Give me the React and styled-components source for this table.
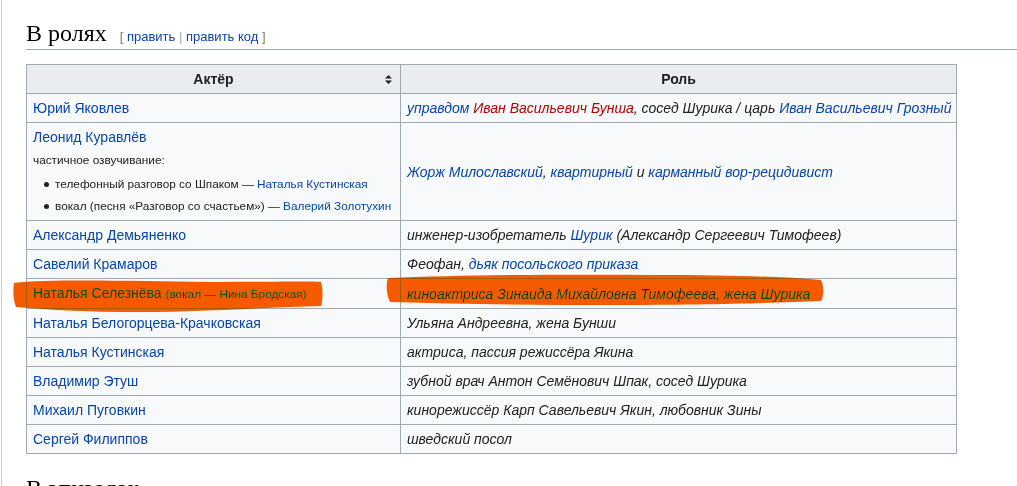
import React from 'react';
import styled, { createGlobalStyle } from 'styled-components';

const GlobalStyle = createGlobalStyle`
  html, body {
    margin: 0;
    background: #ffffff;
  }
  body {
    font-family: "Liberation Sans", Arial, sans-serif;
    color: #202122;
  }
`;

const Page = styled.div`
  margin-left: 1px;
  border-left: 1px solid #a7d7f9;
  padding: 18px 0 0 24px;
  min-height: 468px;
  overflow: hidden;
`;

const Heading = styled.h2`
  margin: 0 0 14px;
  padding: 0;
  height: 31px;
  font-family: "Liberation Serif", "Times New Roman", serif;
  font-weight: normal;
  font-size: 24px;
  line-height: 31px;
  color: #000;
  border-bottom: 1px solid #a2a9b1;
  margin-top: ${p => (p.$next ? '19px' : '0')};
  white-space: nowrap;
`;

const EditSection = styled.span`
  margin-left: 13px;
  font-family: "Liberation Sans", Arial, sans-serif;
  font-size: 13px;
  line-height: 1;
  color: #54595d;
`;

const Bracket = styled.span`
  color: #8a7656;
`;

const Divider = styled.span`
  color: #a2a9b1;
`;

const A = styled.a`
  color: ${p => (p.$red ? '#ba0000' : '#0645ad')};
  text-decoration: none;
  cursor: pointer;
`;

const TableWrap = styled.div`
  position: relative;
  width: 931px;
`;

const Table = styled.table`
  border-collapse: collapse;
  width: 931px;
  background: #f8f9fa;
  font-size: 14px;
  line-height: 22px;
  color: #202122;
  table-layout: fixed;
`;

const Th = styled.th`
  background: #eaecf0;
  border: 1px solid #a2a9b1;
  padding: 3px 6px;
  font-weight: bold;
  text-align: center;
  width: ${p => p.$w || 'auto'};
`;

const HeadInner = styled.div`
  display: grid;
  grid-template-columns: 1fr auto 1fr;
  align-items: center;
`;

const SortIcon = styled.svg`
  justify-self: end;
  margin-right: 2px;
  margin-top: 1px;
  width: 7px;
  height: 9px;
`;

const Td = styled.td`
  border: 1px solid #a2a9b1;
  padding: 3px 6px;
  vertical-align: middle;
  font-style: ${p => (p.$role ? 'italic' : 'normal')};
  white-space: nowrap;
`;

const Note = styled.span`
  font-size: 11.8px;
`;

const SmallLine = styled.div`
  margin-top: 1px;
  font-size: 11.8px;
  line-height: 22px;
`;

const List = styled.ul`
  margin: 2px 0 0;
  padding: 0;
  list-style: none;
`;

const Item = styled.li`
  display: flex;
  align-items: center;
  gap: 6px;
  padding-left: 11px;
  font-size: 11.8px;
  line-height: 22px;
  &::before {
    content: '';
    width: 5px;
    height: 5px;
    border-radius: 50%;
    background: #202122;
  }
`;

const Marker = styled.svg`
  position: absolute;
  left: -16px;
  top: 208px;
  width: 820px;
  height: 43px;
  mix-blend-mode: darken;
  pointer-events: none;
`;

const rows = [
  [
    <A>Юрий Яковлев</A>,
    <>
      <A>управдом</A> <A $red>Иван Васильевич Бунша</A>, сосед Шурика / царь <A>Иван Васильевич Грозный</A>
    </>,
  ],
  [
    <>
      <A>Леонид Куравлёв</A>
      <SmallLine>частичное озвучивание:</SmallLine>
      <List>
        <Item><span>телефонный разговор со Шпаком — <A>Наталья Кустинская</A></span></Item>
        <Item><span>вокал (песня «Разговор со счастьем») — <A>Валерий Золотухин</A></span></Item>
      </List>
    </>,
    <>
      <A>Жорж Милославский</A>, <A>квартирный</A> и <A>карманный вор-рецидивист</A>
    </>,
  ],
  [
    <A>Александр Демьяненко</A>,
    <>
      инженер-изобретатель <A>Шурик</A> (Александр Сергеевич Тимофеев)
    </>,
  ],
  [
    <A>Савелий Крамаров</A>,
    <>
      Феофан, <A>дьяк посольского приказа</A>
    </>,
  ],
  [
    <>
      <A>Наталья Селезнёва</A> <Note>(вокал — <A>Нина Бродская</A>)</Note>
    </>,
    <>киноактриса Зинаида Михайловна Тимофеева, жена <A>Шурика</A></>,
  ],
  [<A>Наталья Белогорцева-Крачковская</A>, <>Ульяна Андреевна, жена Бунши</>],
  [<A>Наталья Кустинская</A>, <>актриса, пассия режиссёра Якина</>],
  [<A>Владимир Этуш</A>, <>зубной врач Антон Семёнович Шпак, сосед Шурика</>],
  [<A>Михаил Пуговкин</A>, <>кинорежиссёр Карп Савельевич Якин, любовник Зины</>],
  [<A>Сергей Филиппов</A>, <>шведский посол</>],
];

export default function App() {
  return (
    <>
      <GlobalStyle />
      <Page>
        <Heading>
          В ролях
          <EditSection>
            <Bracket>[ </Bracket>
            <A>править</A>
            <Divider> | </Divider>
            <A>править код</A>
            <Bracket> ]</Bracket>
          </EditSection>
        </Heading>

        <TableWrap>
          <Table>
            <thead>
              <tr>
                <Th $w="361px">
                  <HeadInner>
                    <span />
                    <span>Актёр</span>
                    <SortIcon viewBox="0 0 7 9">
                      <path d="M3.5 0 L7 3.6 L0 3.6 Z M0 5.4 L7 5.4 L3.5 9 Z" fill="#202122" />
                    </SortIcon>
                  </HeadInner>
                </Th>
                <Th>Роль</Th>
              </tr>
            </thead>
            <tbody>
              {rows.map(([actor, role], i) => (
                <tr key={i}>
                  <Td>{actor}</Td>
                  <Td $role>{role}</Td>
                </tr>
              ))}
            </tbody>
          </Table>
          <Marker viewBox="0 0 820 43">
            <path
              d="M4,11 C40,7 120,9 200,10 C260,10 300,9 311,10 C313,17 313,28 311,34 C260,35 200,40 130,40 C80,40 40,38 6,35 C3,28 3,18 4,11 Z"
              fill="#f65a00"
            />
            <path
              d="M378,6 C450,3 550,2 650,3 C720,3 780,5 811,8 C814,14 814,24 811,29 C760,31 700,33 600,33 C520,33 450,32 380,30 C376,22 376,12 378,6 Z"
              fill="#f65a00"
            />
          </Marker>
        </TableWrap>

        <Heading $next>В эпизодах</Heading>
      </Page>
    </>
  );
}
